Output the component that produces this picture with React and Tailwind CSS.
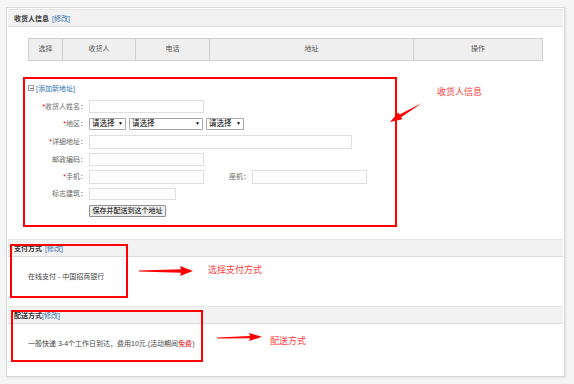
import React from 'react';

const font = { fontFamily: '"Liberation Sans", "Noto Sans CJK SC", sans-serif' };

function Req() {
  return <span className="text-[#e60000]">*</span>;
}

function Label({ children, req }) {
  return (
    <div className="w-[62px] shrink-0 text-right text-[7px] text-[#666] leading-none">
      {req && <Req />}
      {children}：
    </div>
  );
}

function Input({ w, h = 'h-[13px]' }) {
  return <div className={`${w} ${h} ml-[2px] border border-[#dedede] bg-white`} />;
}

function Select({ w, wide }) {
  return (
    <div
      className={`${w} h-[12px] border border-[#a9a9a9] rounded-[1px] bg-white flex items-center justify-between px-[2px] text-[7.5px] text-black leading-none`}
    >
      <span>请选择</span>
      <span className="text-[5px]">▼</span>
    </div>
  );
}

function SectionHead({ title, gap = true }) {
  return (
    <div className="h-[18px] bg-[#f2f2f2] border-t border-[#e6e6e6] border-b border-b-[#dcdcdc] flex items-center pl-[6px] text-[7px] leading-none">
      <span className="font-bold text-[#333]">{title}</span>
      <span className={`text-[#2f6fb1] ${gap ? 'ml-[3px]' : ''}`}>[修改]</span>
    </div>
  );
}

export default function App() {
  const cols = [
    ['选择', 'w-[34px]'],
    ['收货人', 'w-[73px]'],
    ['电话', 'w-[74px]'],
    ['地址', 'w-[204px]'],
    ['操作', 'flex-1'],
  ];

  return (
    <div className="relative w-[574px] h-[384px] bg-[#f5f5f5] pt-[7px] pl-[6px]" style={font}>
      <div className="w-[559px] h-[370px] bg-white border border-[#d9d9d9] shadow-[1px_1px_2px_rgba(0,0,0,0.08)] px-[1px] pt-[1px]">
        {/* 收货人信息 */}
        <SectionHead title="收货人信息" />

        <div className="mt-[11px] ml-[20px] w-[515px] h-[23px] flex border border-[#cfcfcf] bg-[#efefef]">
          {cols.map(([t, w], i) => (
            <div
              key={t}
              className={`${w} h-full flex items-center justify-center text-[7px] text-[#555] ${i < 4 ? 'border-r border-[#cfcfcf]' : ''}`}
            >
              {t}
            </div>
          ))}
        </div>

        {/* add address form */}
        <div className="mt-[16px] ml-[15px] w-[374px] h-[150px] border-2 border-[#ff0000] pt-[3px]">
          <div className="h-[12px] flex items-center pl-[3px] text-[7px] leading-none">
            <span className="w-[6px] h-[6px] border border-[#999] flex items-center justify-center mr-[2px]">
              <span className="w-[3px] h-px bg-[#777]" />
            </span>
            <span className="text-[#2f6fb1]">[添加新地址]</span>
          </div>

          <div className="mt-[4px] h-[17px] flex items-center">
            <Label req>收货人姓名</Label>
            <Input w="w-[115px]" />
          </div>
          <div className="h-[17px] flex items-center">
            <Label req>地区</Label>
            <div className="ml-[2px] flex gap-[3px]">
              <Select w="w-[37px]" />
              <Select w="w-[74px]" />
              <Select w="w-[38px]" />
            </div>
          </div>
          <div className="h-[19px] flex items-center">
            <Label req>详细地址</Label>
            <Input w="w-[263px]" h="h-[14px]" />
          </div>
          <div className="h-[17px] flex items-center">
            <Label>邮政编码</Label>
            <Input w="w-[115px]" />
          </div>
          <div className="h-[17px] flex items-center">
            <Label req>手机</Label>
            <Input w="w-[115px]" h="h-[14px]" />
            <div className="w-[46px] text-right text-[7px] text-[#666] leading-none">座机：</div>
            <Input w="w-[115px]" h="h-[14px]" />
          </div>
          <div className="h-[17px] flex items-center">
            <Label>标志建筑</Label>
            <Input w="w-[87px]" h="h-[12px]" />
          </div>
          <div className="h-[17px] flex items-center pl-[64px]">
            <div className="w-[77px] h-[12px] border border-[#8f8f8f] rounded-[1px] bg-[#eeeeee] flex items-center justify-center text-[7px] text-black leading-none">
              保存并配送到这个地址
            </div>
          </div>
        </div>

        {/* 支付方式 */}
        <div className="mt-[12px]">
          <SectionHead title="支付方式" />
          <div className="h-[49px] pl-[20px] pt-[15px] text-[7px] text-[#444] leading-[10px]">
            在线支付 - 中国招商银行
          </div>
        </div>

        {/* 配送方式 */}
        <div>
          <SectionHead title="配送方式" gap={false} />
          <div className="pl-[20px] pt-[15px] text-[7px] text-[#444] leading-[10px]">
            一般快递 3-4个工作日到达，费用10元.(活动期间<span className="text-[#e60000]">免费</span>)
          </div>
        </div>
      </div>

      {/* annotation boxes */}
      <div className="absolute left-[10px] top-[244px] w-[118px] h-[54px] border-2 border-[#ff0000]" />
      <div className="absolute left-[11px] top-[310px] w-[192px] h-[52px] border-2 border-[#ff0000]" />

      {/* annotation arrows */}
      <svg className="absolute left-0 top-0 pointer-events-none" width="574" height="384">
        <polygon
          points="422,103 399.5,114.6 398.3,112.5 390,122 402.3,119.3 401.1,117.2"
          fill="#ff0000"
        />
        <polygon points="139,270.6 181,269.3 180,266 193,271 180,276 181,272.7 139,271.4" fill="#ff0000" />
        <polygon points="217,337.6 250,336 249,333 262,336.8 249,341 250,338.2 217,338.4" fill="#ff0000" />
      </svg>

      <div className="absolute left-[437px] top-[86px] text-[9px] leading-[12px] text-[#ff3b3b]">收货人信息</div>
      <div className="absolute left-[208px] top-[264px] text-[9px] leading-[12px] text-[#ff3b3b]">选择支付方式</div>
      <div className="absolute left-[270px] top-[335px] text-[9px] leading-[12px] text-[#ff3b3b]">配送方式</div>
    </div>
  );
}
